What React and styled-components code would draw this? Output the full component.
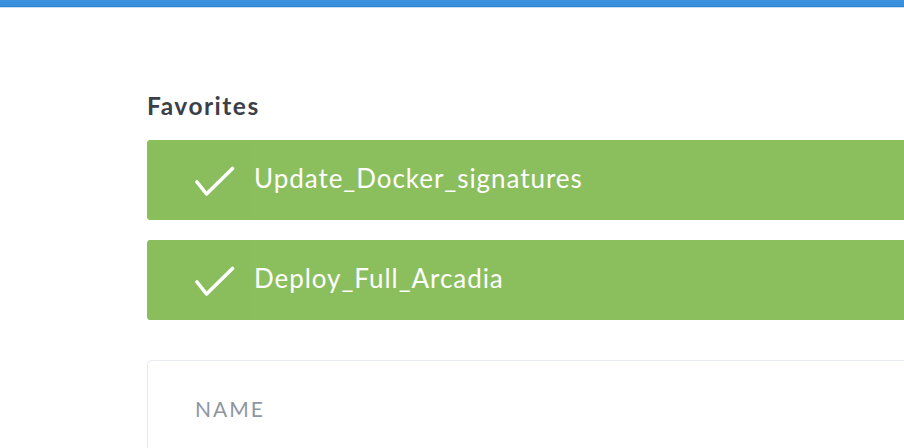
import React from "react";
import styled, { createGlobalStyle } from "styled-components";

const Global = createGlobalStyle`
  html, body { margin: 0; padding: 0; background: #ffffff; overflow: hidden; }
  body { font-family: Lato, "Open Sans", sans-serif; width: 904px; height: 448px; }
`;

const TopBar = styled.div`
  height: 7px;
  background: #3a90dc;
  border-bottom: 1px solid #c9e1f5;
  box-shadow: inset 0 -1px 0 #2f82cf;
`;

const Main = styled.main`
  padding: 83px 0 0 147px;
  width: 1100px;
  box-sizing: border-box;
`;

const SectionTitle = styled.h2`
  margin: 0 0 19px 0;
  font-size: 24.5px;
  font-weight: 700;
  color: #3b4048;
  line-height: 30px;
  letter-spacing: 1.5px;
`;

const FavList = styled.div`
  display: flex;
  flex-direction: column;
  gap: 20px;
`;

const FavItem = styled.div`
  display: flex;
  align-items: center;
  height: 80px;
  background: #8bbe5d;
  border-radius: 4px;
  color: #ffffff;
  overflow: hidden;
`;

const IconCell = styled.div`
  width: 103px;
  align-self: stretch;
  display: flex;
  align-items: center;
  justify-content: flex-end;
  padding-right: 15px;
  box-sizing: border-box;
  background: #8abd5c;
`;

const FavName = styled.span`
  font-size: 26px;
  font-weight: 400;
  line-height: 1;
  padding-left: 4px;
  padding-bottom: 4px;
  letter-spacing: 0.95px;
`;

const Card = styled.div`
  margin-top: 40px;
  border: 1.5px solid #e7eaee;
  border-radius: 5px;
  height: 200px;
  padding: 35px 0 0 47px;
  box-sizing: border-box;
`;

const ColHead = styled.div`
  font-size: 21px;
  font-weight: 400;
  color: #8d96a2;
  text-transform: uppercase;
  letter-spacing: 2px;
`;

const Check = () => (
  <svg width="40" height="36" viewBox="0 0 40 36" fill="none">
    <path d="M2 20 L11.5 32 L37.5 6.5" stroke="#fff" strokeWidth="3.6" strokeLinecap="round" strokeLinejoin="round" />
  </svg>
);

const favorites = ["Update_Docker_signatures", "Deploy_Full_Arcadia"];

export default function App() {
  return (
    <>
      <Global />
      <TopBar />
      <Main>
        <SectionTitle>Favorites</SectionTitle>
        <FavList>
          {favorites.map((f) => (
            <FavItem key={f}>
              <IconCell>
                <Check />
              </IconCell>
              <FavName>{f}</FavName>
            </FavItem>
          ))}
        </FavList>
        <Card>
          <ColHead>Name</ColHead>
        </Card>
      </Main>
    </>
  );
}
